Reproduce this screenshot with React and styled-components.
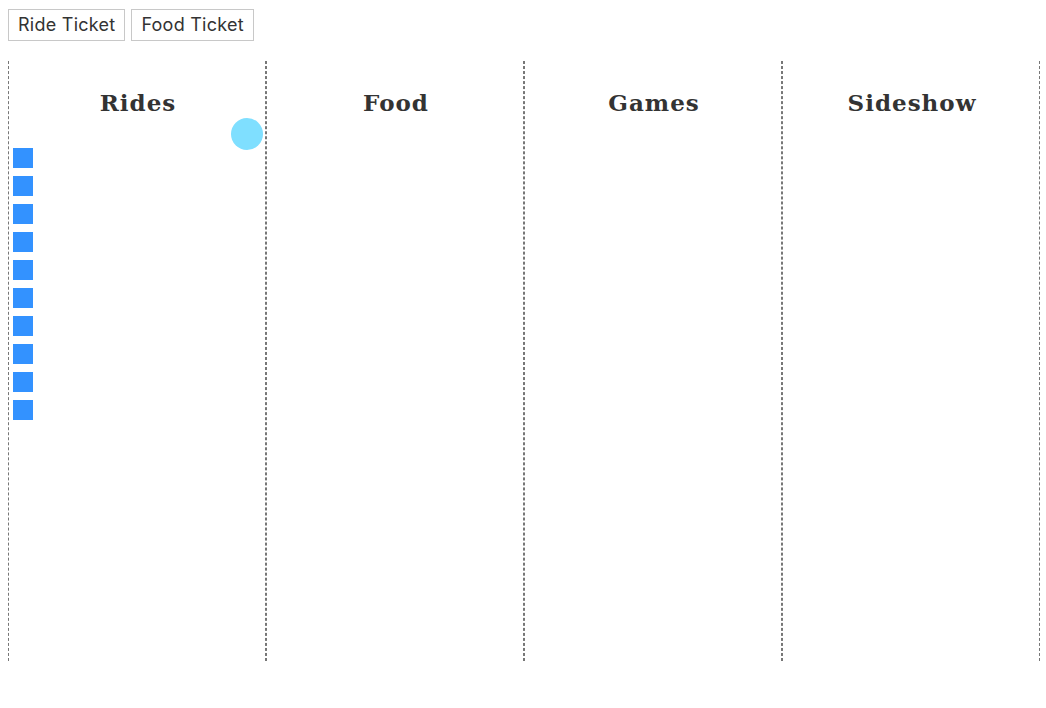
import React from "react";
import styled, { createGlobalStyle } from "styled-components";

const GlobalStyle = createGlobalStyle`
    body {
        margin: 8px 6px 8px 8px;
        background: #fff;
        font-family: "Inter", "Open Sans", sans-serif;
        color: #333;
    }
`;

const columns = [
    { name: "Rides", token: true, items: 10 },
    { name: "Food", items: 0 },
    { name: "Games", items: 0 },
    { name: "Sideshow", items: 0 },
];

const App = () => {
    return (
        <>
            <GlobalStyle />
            <Toolbar>
                <TicketButton>Ride Ticket</TicketButton>
                <TicketButton>Food Ticket</TicketButton>
            </Toolbar>
            <Board>
                {columns.map((col) => (
                    <Column key={col.name}>
                        <Heading>{col.name}</Heading>
                        <TokenRow>{col.token && <Token />}</TokenRow>
                        <TicketList>
                            {Array.from({ length: col.items }).map((_, i) => (
                                <Ticket key={i} />
                            ))}
                        </TicketList>
                    </Column>
                ))}
            </Board>
        </>
    );
};

export default App;

const Toolbar = styled.div`
    display: flex;
    gap: 6px;
    margin-top: 1px;
`;

const TicketButton = styled.button`
    height: 32px;
    padding: 0 9px 2px;
    background: #fff;
    border: 1px solid #c8c8c8;
    font-family: "Inter", "Open Sans", sans-serif;
    font-size: 18px;
    font-weight: 400;
    letter-spacing: 0.25px;
    color: #333;
    cursor: pointer;
`;

const Board = styled.div`
    display: grid;
    grid-template-columns: repeat(4, 1fr);
    margin-top: 20px;
    height: 600px;
`;

const Column = styled.div`
    display: flex;
    flex-direction: column;
    border-left: 1px dashed #777;
    border-right: 1px dashed #777;
    padding: 0 2px 0 4px;
`;

const Heading = styled.h2`
    margin: 28px 0 0;
    text-align: center;
    font-family: "DejaVu Serif", serif;
    font-weight: bold;
    font-size: 23px;
    line-height: 28px;
    letter-spacing: 1px;
    color: #333;
`;

const TokenRow = styled.div`
    display: flex;
    justify-content: flex-end;
    height: 30px;
    margin-top: 1px;
`;

const Token = styled.div`
    width: 32px;
    height: 32px;
    border-radius: 50%;
    background: #7fdfff;
`;

const TicketList = styled.div`
    display: flex;
    flex-direction: column;
    gap: 8px;
`;

const Ticket = styled.div`
    width: 20px;
    height: 20px;
    background: #3392ff;
`;
